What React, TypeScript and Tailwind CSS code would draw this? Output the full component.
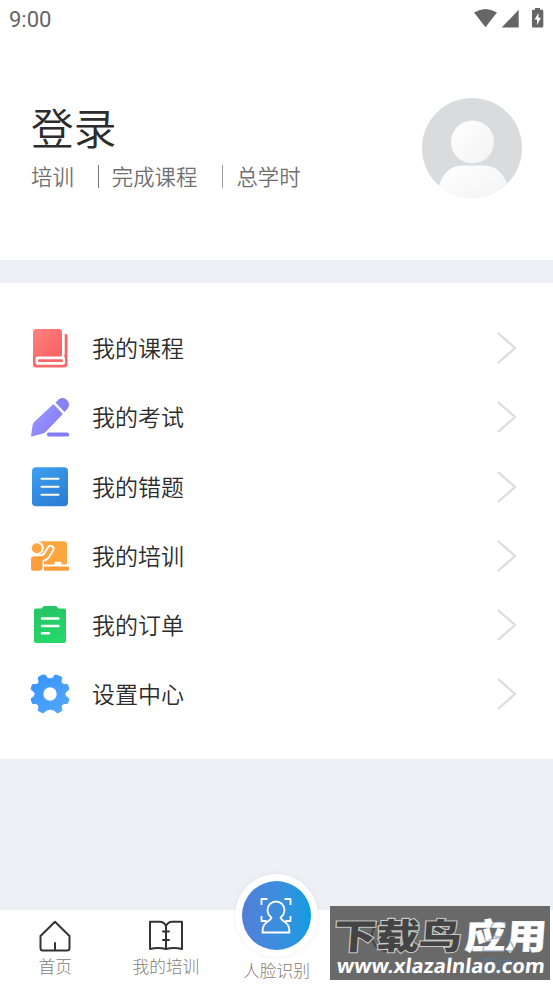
import React from 'react';

const CJK = "font-['Noto_Sans_CJK_SC',sans-serif]";

function BookIcon() {
  return (
    <svg width="40" height="40" viewBox="0 0 40 40">
      <defs>
        <linearGradient id="red" x1="0" y1="0" x2="1" y2="1">
          <stop offset="0" stopColor="#ff8080" />
          <stop offset="1" stopColor="#f95f5f" />
        </linearGradient>
      </defs>
      <path d="M6 1H29Q32 1 32 4V27.500H7Q3 27.500 3 31V4Q3 1 6 1Z" fill="url(#red)" />
      <path d="M34.500 6H36Q37.500 6 37.500 8V36Q37.500 39.500 34 39.500H6Q3 39.500 3 36V30Q3 27 6.500 27H32.500Q34.500 27 34.500 25Z" fill="#f96868" />
      <path d="M33.300 5V27Q33.300 29 31 29" fill="none" stroke="#fff" strokeWidth="2.200" />
      <rect x="5.500" y="28.500" width="29.500" height="8.300" rx="2" fill="#fff" />
      <rect x="8" y="31.300" width="24.800" height="2.800" rx="1.200" fill="#f96868" />
    </svg>
  );
}

function PencilIcon() {
  return (
    <svg width="40" height="40" viewBox="0 0 40 40">
      <defs>
        <linearGradient id="violet" x1="0" y1="0" x2="1" y2="0.800">
          <stop offset="0" stopColor="#a09aff" />
          <stop offset="1" stopColor="#827af5" />
        </linearGradient>
      </defs>
      <path d="M23.500 7L32.800 17L15.500 35Q14 36.500 12 36.800L1.800 39.400Q0.900 39.500 1.100 38.500L2.700 27.500Q3 26 4.200 25Z" fill="url(#violet)" />
      <path d="M25.500 5.500L29 2.300Q33 -0.700 37 3Q40.700 7 37.700 11.500L34.500 15Z" fill="#8880f7" />
      <rect x="17" y="35.500" width="22" height="3.900" rx="1.500" fill="#847cf5" />
    </svg>
  );
}

function ListIcon() {
  return (
    <svg width="40" height="40" viewBox="0 0 40 40">
      <defs>
        <linearGradient id="blue" x1="0" y1="0" x2="0.600" y2="1">
          <stop offset="0" stopColor="#3ea0f0" />
          <stop offset="1" stopColor="#2c7fd8" />
        </linearGradient>
      </defs>
      <rect x="2" y="0.200" width="36" height="39" rx="4" fill="url(#blue)" />
      <path d="M11.500 11.700H28.500M11.500 19.700H28.500M11.500 27.700H28.500" stroke="#fff" strokeWidth="2.100" strokeLinecap="round" />
    </svg>
  );
}

function TrainingIcon() {
  return (
    <svg width="40" height="40" viewBox="0 0 40 40">
      <rect x="6" y="5.300" width="31" height="24.500" rx="3" fill="#ffa63f" />
      <circle cx="6.800" cy="12" r="7" fill="#fff" />
      <circle cx="6.800" cy="12.300" r="5" fill="#ffa63f" />
      <path d="M0 19H14V36H0Z" fill="#fff" />
      <path d="M4 22.500H9Q14 22.500 16.500 19.500L20.500 13" fill="none" stroke="#fff" strokeWidth="8" strokeLinecap="round" strokeLinejoin="round" />
      <path d="M4 22.500H9Q14 22.500 16.500 19.500L20.500 13" fill="none" stroke="#ffa63f" strokeWidth="4.200" strokeLinecap="round" strokeLinejoin="round" />
      <path d="M1 23Q1 20.400 4 20.400H12.500V31Q12.500 34.700 9 34.700H3Q1 34.700 1 32.500Z" fill="#ff9d3c" />
      <path d="M13.500 29.300H39" stroke="#fff" strokeWidth="1.600" />
      <rect x="24.500" y="25.800" width="7" height="4" rx="1" fill="#fff" />
      <rect x="14" y="30.400" width="25" height="4.300" rx="1" fill="#ff9d3c" />
    </svg>
  );
}

function OrderIcon() {
  return (
    <svg width="40" height="40" viewBox="0 0 40 40">
      <defs>
        <linearGradient id="green" x1="0" y1="0" x2="0.300" y2="1">
          <stop offset="0" stopColor="#24c263" />
          <stop offset="1" stopColor="#26d769" />
        </linearGradient>
      </defs>
      <path d="M6 3.500H11.500L13 1.700Q13.700 1 15 1H25Q26.300 1 27 1.700L28.500 3.500H34Q36 3.500 36 5.500V36Q36 38 34 38H6Q4 38 4 36V5.500Q4 3.500 6 3.500Z" fill="url(#green)" />
      <path d="M12 13.500H28.500M12 21H28.500M12 28.300H19" stroke="#fff" strokeWidth="2.400" strokeLinecap="round" />
    </svg>
  );
}

function GearIcon() {
  return (
    <svg width="40" height="40" viewBox="0 0 40 40">
      <defs>
        <linearGradient id="gear" x1="0" y1="0" x2="1" y2="1">
          <stop offset="0" stopColor="#3592fc" />
          <stop offset="1" stopColor="#55a8ff" />
        </linearGradient>
      </defs>
      <path d="M12 1.300L15.200 1L17 4Q20 6 23 4L25 1L28.500 1.700L31.800 3.400L31 7.500Q31.500 10.500 34.500 10.500L37.500 10.500L39 15.200L36 17.700Q33.500 20 36 22.500L39 25L37.500 29.500H34Q31.500 30 31.200 33L32 36.500L27.500 39L24.500 36.500Q20 33.500 16 36.500L13 39L8.200 36.500L9 33Q8.500 30 6 29.500H2.500L1 25L4 22.500Q6.500 20 4 17.700L1 15.200L2.500 10.500H6Q9 10.500 9 7.500L8.200 3.400Z" fill="url(#gear)" stroke="url(#gear)" strokeLinejoin="round" />
      <circle cx="20" cy="20" r="6.700" fill="#fff" />
    </svg>
  );
}

const rows = [
  { label: '我的课程', icon: <BookIcon /> },
  { label: '我的考试', icon: <PencilIcon /> },
  { label: '我的错题', icon: <ListIcon /> },
  { label: '我的培训', icon: <TrainingIcon /> },
  { label: '我的订单', icon: <OrderIcon /> },
  { label: '设置中心', icon: <GearIcon /> },
];

function StatusBar() {
  return (
    <div className="flex h-10 items-start justify-between pl-[9px] pr-[9px] pt-[7px]">
      <span className="mt-px font-[Roboto,sans-serif] text-[22px] leading-6 text-[#666]">9:00</span>
      <svg width="72" height="24" viewBox="472 7 72 24" fill="#666">
        <path d="M474 12.500Q485.500 5.500 497 12.500L485.500 27.300Z" />
        <path d="M518.700 9.700V27.500H501.700Z" />
        <path d="M535 8H540V9.700H542Q543.300 9.700 543.300 11V26.300Q543.300 27.500 542 27.500H533.300Q532 27.500 532 26.300V11Q532 9.700 533.300 9.700H535Z" />
        <path d="M538.500 13L534.500 19.500H537V25L541 17.800H538.500Z" fill="#fff" />
      </svg>
    </div>
  );
}

function Avatar() {
  return (
    <svg width="100" height="100" viewBox="0 0 100 100">
      <defs>
        <clipPath id="round"><circle cx="50" cy="50" r="50" /></clipPath>
        <linearGradient id="person" x1="0" y1="0" x2="1" y2="1">
          <stop offset="0" stopColor="#fff" />
          <stop offset="1" stopColor="#f3f3f3" />
        </linearGradient>
      </defs>
      <g clipPath="url(#round)">
        <rect width="100" height="100" fill="#d9dbdd" />
        <circle cx="50.500" cy="44" r="21.500" fill="url(#person)" />
        <path d="M16 91Q22 68 40 67.500H62Q79 68 86 88V101H16Z" fill="url(#person)" />
      </g>
    </svg>
  );
}

function Watermark() {
  return (
    <div className="absolute left-[330px] top-[906px] h-[74px] w-[220px] bg-[#696969]">
      <svg width="220" height="74" viewBox="330 906 220 74">
        <circle cx="387" cy="936" r="15" fill="none" stroke="#444" strokeWidth="2" />
        <g transform="translate(68 949) skewX(-4) scale(1 0.860)" fontFamily="Noto Sans CJK SC, sans-serif" fontWeight="900" fontSize="41">
          <text x="265" y="0" textLength="128" lengthAdjust="spacingAndGlyphs" fill="#444" stroke="#c8c8c8" strokeWidth="2.400" paintOrder="stroke">下载鸟</text>
          <text x="396" y="0" textLength="82" lengthAdjust="spacingAndGlyphs" fill="#fff" stroke="#fff" strokeWidth="0.500">应用</text>
        </g>
        <g fill="none" stroke="#5b7f9f" strokeWidth="1.500" opacity="0.500">
          <circle cx="499" cy="929" r="8" />
          <path d="M483 951Q484 938 498 938Q513 938 514 951Z" />
        </g>
        <text x="482" y="971" fontFamily="Noto Sans CJK SC, sans-serif" fontSize="16" fill="#567897">我的</text>
        <g transform="translate(336 973) skewX(-7)">
          <text x="0" y="0" fontFamily="Noto Sans, sans-serif" fontWeight="700" fontSize="20" textLength="208" lengthAdjust="spacingAndGlyphs" fill="#fff">www.xlazalnlao.com</text>
        </g>
      </svg>
    </div>
  );
}

function BottomNav() {
  return (
    <nav className="relative grid h-[74px] grid-cols-5 bg-white text-[16.700px] font-light leading-5 text-[#857c73]">
      <div className="flex flex-col items-center pt-[9px]">
        <svg width="34" height="34" viewBox="0 0 34 34" fill="none" stroke="#333" strokeWidth="2" strokeLinejoin="round" strokeLinecap="round">
          <path d="M17 2.800L31.500 17V29Q31.500 31.500 29 31.500H5Q2.500 31.500 2.500 29V17ZM17 24V31" />
        </svg>
        <span className="mt-[3px]">首页</span>
      </div>
      <div className="flex flex-col items-center pt-[9px]">
        <svg width="36" height="34" viewBox="0 0 36 34" fill="none" stroke="#333" strokeWidth="2" strokeLinejoin="round" strokeLinecap="round">
          <path d="M18 7Q16 2.800 12 2.800H2V30Q10 28 18 30Q26 28 34 30V2.800H24Q20 2.800 18 7V30M15 12.500H21M15 21H21" />
        </svg>
        <span className="mt-[3px] whitespace-nowrap">我的培训</span>
      </div>
      <div className="flex flex-col items-center">
        <div className="-mt-[36px] flex h-[83px] w-[83px] shrink-0 items-center justify-center rounded-full bg-white shadow-[0_0_5px_rgba(0,0,0,0.070)]">
          <div className="flex h-[69px] w-[69px] items-center justify-center rounded-full bg-linear-to-r from-[#517fd8] to-[#079be2]">
            <svg width="40" height="40" viewBox="0 0 40 40" fill="none" stroke="#fff" strokeWidth="1.800" strokeLinejoin="round">
              <path d="M5.500 9V3H11.500M28.500 3H34.500V9M5.500 20V25H10.500M34.500 20V25H29.500" />
              <path d="M15.500 21.500Q11.500 18.500 11.500 14A8.500 8.500 0 0 1 28.500 14Q28.500 18.500 24.500 21.500Q25 23.500 29 26Q33.500 29 33.500 36.500H6.500Q6.500 29 11 26Q15 23.500 15.500 21.500Z" />
            </svg>
          </div>
        </div>
        <span className="mt-[3px] whitespace-nowrap">人脸识别</span>
      </div>
    </nav>
  );
}

export default function App() {
  return (
    <div className={`relative flex h-[984px] w-[553px] flex-col overflow-hidden bg-[#edf1f6] ${CJK}`}>
      <header className="h-[260px] bg-white">
        <StatusBar />
        <div className="flex items-start justify-between pl-[31px] pr-[31px] pt-[58px]">
          <div>
            <h1 className="-mt-[2px] text-[42.700px] font-[350] leading-[60px] text-[#2c2c2c]">登录</h1>
            <div className="mt-[8px] flex items-center text-[21.400px] font-[350] leading-6 text-[#707070]">
              <span>培训</span>
              <i className="ml-6 mr-[13px] h-[23px] w-px bg-[#777]" />
              <span>完成课程</span>
              <i className="ml-[25px] mr-[13px] h-[23px] w-px bg-[#999]" />
              <span>总学时</span>
            </div>
          </div>
          <Avatar />
        </div>
      </header>
      <main className="mt-[23px] h-[476px] bg-white pt-[30.600px]">
        {rows.map((row) => (
          <div key={row.label} className="flex h-[69.200px] items-center pl-[30px] pr-[35px]">
            {row.icon}
            <span className="-mt-[2px] ml-[22px] flex-1 text-[23px] font-[350] leading-8 text-[#2c2c2c]">{row.label}</span>
            <svg width="22" height="32" viewBox="0 0 22 32" fill="none" stroke="#dcdcdc" strokeWidth="2.200">
              <path d="M2 1L19 16L2 31" />
            </svg>
          </div>
        ))}
      </main>
      <div className="flex-1" />
      <BottomNav />
      <Watermark />
    </div>
  );
}
